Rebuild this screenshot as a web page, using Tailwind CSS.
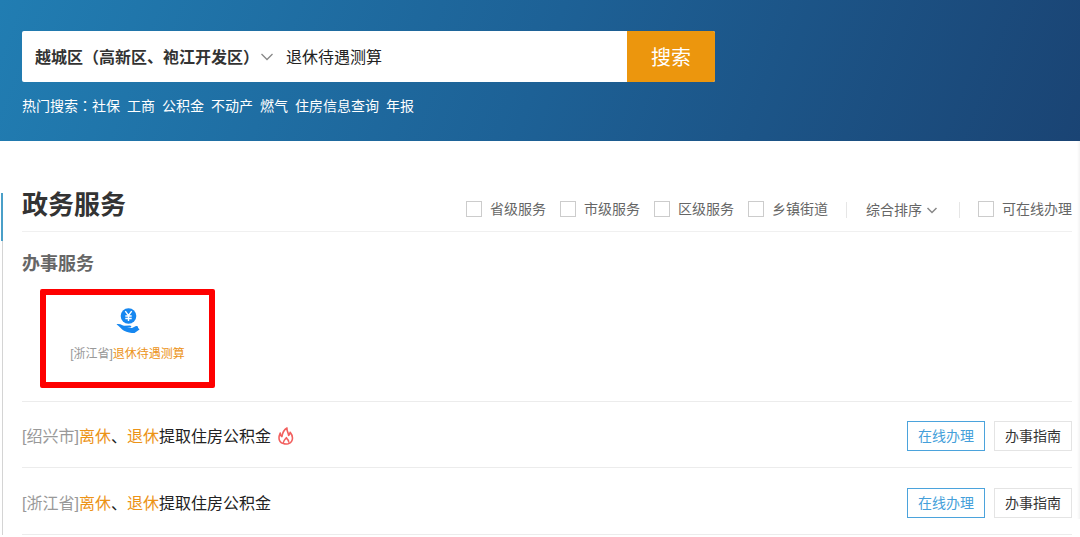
<!DOCTYPE html>
<html lang="zh-CN">
<head>
<meta charset="utf-8">
<meta name="viewport" content="width=device-width, initial-scale=1">
<title>政务服务</title>
<script src="https://cdn.jsdelivr.net/npm/@tailwindcss/browser@4"></script>
</head>
<body class="bg-white font-['Liberation_Sans','Noto_Sans_CJK_SC',sans-serif] text-sm text-[#333]">
  <header class="bg-linear-110 from-[#217db2] via-[#1d6196] to-[#1a4474] px-[22px] pt-[31px] pb-[26px]">
    <form class="flex h-[51px] w-full max-w-[693px] overflow-hidden rounded-xs bg-white">
      <div class="relative flex shrink-0 items-center">
        <select aria-label="地区" class="h-full w-[256px] appearance-none bg-transparent pt-[2px] pl-[13px] text-base font-bold text-[#333] outline-none">
          <option>越城区（高新区、袍江开发区）</option>
        </select>
        <svg class="pointer-events-none absolute right-1 size-[14px]" viewBox="0 0 14 14" fill="none" stroke="#888" stroke-width="1.3" aria-hidden="true"><path d="M1.500 4L7 9.500L12.500 4"/></svg>
      </div>
      <input type="text" aria-label="搜索内容" value="退休待遇测算" class="min-w-0 flex-1 px-2 pt-[2px] text-base text-[#222] outline-none">
      <button type="submit" class="w-[88px] shrink-0 bg-[#ec960d] pt-[2px] text-xl text-white">搜索</button>
    </form>
    <nav aria-label="热门搜索" class="mt-[13px] flex h-5 items-baseline gap-[7px] whitespace-nowrap text-white">
      <span>热门搜索<span lang="zh-TW" class="font-['Noto_Sans_CJK_TC',sans-serif]">：</span><a href="#">社保</a></span>
      <a href="#">工商</a>
      <a href="#">公积金</a>
      <a href="#">不动产</a>
      <a href="#">燃气</a>
      <a href="#">住房信息查询</a>
      <a href="#">年报</a>
    </nav>
  </header>

  <div class="flex">
    <div class="flex w-[3px] shrink-0 flex-col items-end pt-[52px]" aria-hidden="true">
      <div class="h-12 w-[2px] bg-[#4a9fc8]"></div>
      <div class="w-px flex-1 bg-[#d4d4d4]"></div>
    </div>

    <main class="min-w-0 flex-1 pr-[5px] pl-[19px]">
      <div class="flex items-end justify-between border-b border-[#f0f0f0] pt-11">
        <h1 class="h-[46px] text-[26px] leading-10 font-bold whitespace-nowrap">政务服务</h1>
        <div class="flex h-[32px] items-start whitespace-nowrap text-[#666]">
          <div class="flex gap-[14px]">
            <label class="flex h-5 items-center gap-2"><input type="checkbox" class="size-4 appearance-none border border-[#ccc] bg-white">省级服务</label>
            <label class="flex h-5 items-center gap-2"><input type="checkbox" class="size-4 appearance-none border border-[#ccc] bg-white">市级服务</label>
            <label class="flex h-5 items-center gap-2"><input type="checkbox" class="size-4 appearance-none border border-[#ccc] bg-white">区级服务</label>
            <label class="flex h-5 items-center gap-2"><input type="checkbox" class="size-4 appearance-none border border-[#ccc] bg-white">乡镇街道</label>
          </div>
          <div class="relative mx-[18px] mt-[3px] flex h-4 items-center border-x border-[#e6e6e6] px-[19px]">
            <select aria-label="排序" class="h-5 w-[74px] appearance-none bg-transparent outline-none">
              <option>综合排序</option>
            </select>
            <svg class="pointer-events-none absolute right-[21px] size-3" viewBox="0 0 12 12" fill="none" stroke="#888" stroke-width="1.5" aria-hidden="true"><path d="M1.500 4L6 8.500L10.500 4"/></svg>
          </div>
          <label class="flex h-5 items-center gap-2"><input type="checkbox" class="size-4 appearance-none border border-[#ccc] bg-white">可在线办理</label>
        </div>
      </div>

      <section class="border-b border-[#ececec] pt-[18px] pb-[13px]">
        <h2 class="text-lg font-bold text-[#666]">办事服务</h2>
        <a href="#" class="mt-[11px] ml-[18px] flex h-[99px] w-[175px] flex-col items-center rounded-xs border-6 border-[#fe0000] pt-3 text-xs whitespace-nowrap">
          <svg class="h-[28px] w-[26px]" viewBox="0 0 26 28" aria-hidden="true">
            <circle cx="13.500" cy="9" r="7.800" fill="#1687f0"/>
            <path d="M10.300 4.200L13.500 8.500L16.700 4.200M13.500 8.500V14M10.300 9H16.700M10.300 11.500H16.700" fill="none" stroke="#fff" stroke-width="1.400"/>
            <path d="M1.500 17.200C3.500 16.600 5.500 17.200 7.500 18.300L9 18.700L15 18.500C16.800 18.700 16.800 20.400 15.200 20.500L12 20.900L17 21L20.500 19.200C22 18.600 23.500 19.500 23 20.700L24.500 22.500L19.500 26C16 26 12 25.200 9 23.700C6.500 22.400 4.500 19.300 1.500 17.200Z" fill="#1687f0"/>
          </svg>
          <span class="mt-[11px] text-[#999]">[浙江省]<span class="text-[#ec9317]">退休待遇测算</span></span>
        </a>
      </section>

      <ul>
        <li class="flex h-[66px] items-center justify-between border-b border-[#ececec] pt-[3px]">
          <div class="flex items-center gap-[7px] text-base whitespace-nowrap">
            <a href="#" class="pt-[2px] text-[#222]"><span class="text-[#999]">[绍兴市]</span><span class="text-[#ec9317]">离休</span>、<span class="text-[#ec9317]">退休</span>提取住房公积金</a>
            <svg class="h-[18px] w-4" viewBox="0 0 16 18" fill="none" stroke="#f2605f" stroke-width="1.600" stroke-linejoin="round" stroke-linecap="round" role="img" aria-label="热门"><path d="M5.400 16.600C2.700 15.700 1 13.500 1 10.900C1 9 1.500 7.600 2.200 6C2.300 7.700 2.800 8.900 3.900 9.600C4.400 6 5.600 3 9 1C8.600 3.900 10.400 5.500 10.600 8.400C11.500 7.800 12 6.600 12.200 5.200C13.600 6.900 14.500 8.900 14.500 10.900C14.500 13.600 12.800 15.800 10.200 16.700C8.600 17.200 7 17.200 5.400 16.600C4.600 14.700 6.200 13.100 8.400 10.700C8.700 12.200 10.800 12.900 10.600 14.600"/></svg>
          </div>
          <div class="flex gap-[9px]">
            <button type="button" class="h-[30px] w-[78px] border border-[#4ba3dc] text-[#459fda]">在线办理</button>
            <button type="button" class="h-[30px] w-[78px] border border-[#e4e4e4]">办事指南</button>
          </div>
        </li>
        <li class="flex h-[67px] items-center justify-between border-b border-[#ececec] pt-[3px]">
          <div class="pt-[2px] text-base whitespace-nowrap">
            <a href="#" class="text-[#222]"><span class="text-[#999]">[浙江省]</span><span class="text-[#ec9317]">离休</span>、<span class="text-[#ec9317]">退休</span>提取住房公积金</a>
          </div>
          <div class="flex gap-[9px]">
            <button type="button" class="h-[30px] w-[78px] border border-[#4ba3dc] text-[#459fda]">在线办理</button>
            <button type="button" class="h-[30px] w-[78px] border border-[#e4e4e4]">办事指南</button>
          </div>
        </li>
      </ul>
    </main>
    <div class="mb-4 w-[3px] shrink-0 bg-linear-to-r from-white to-[#f3f3f3]" aria-hidden="true"></div>
  </div>
</body>
</html>
